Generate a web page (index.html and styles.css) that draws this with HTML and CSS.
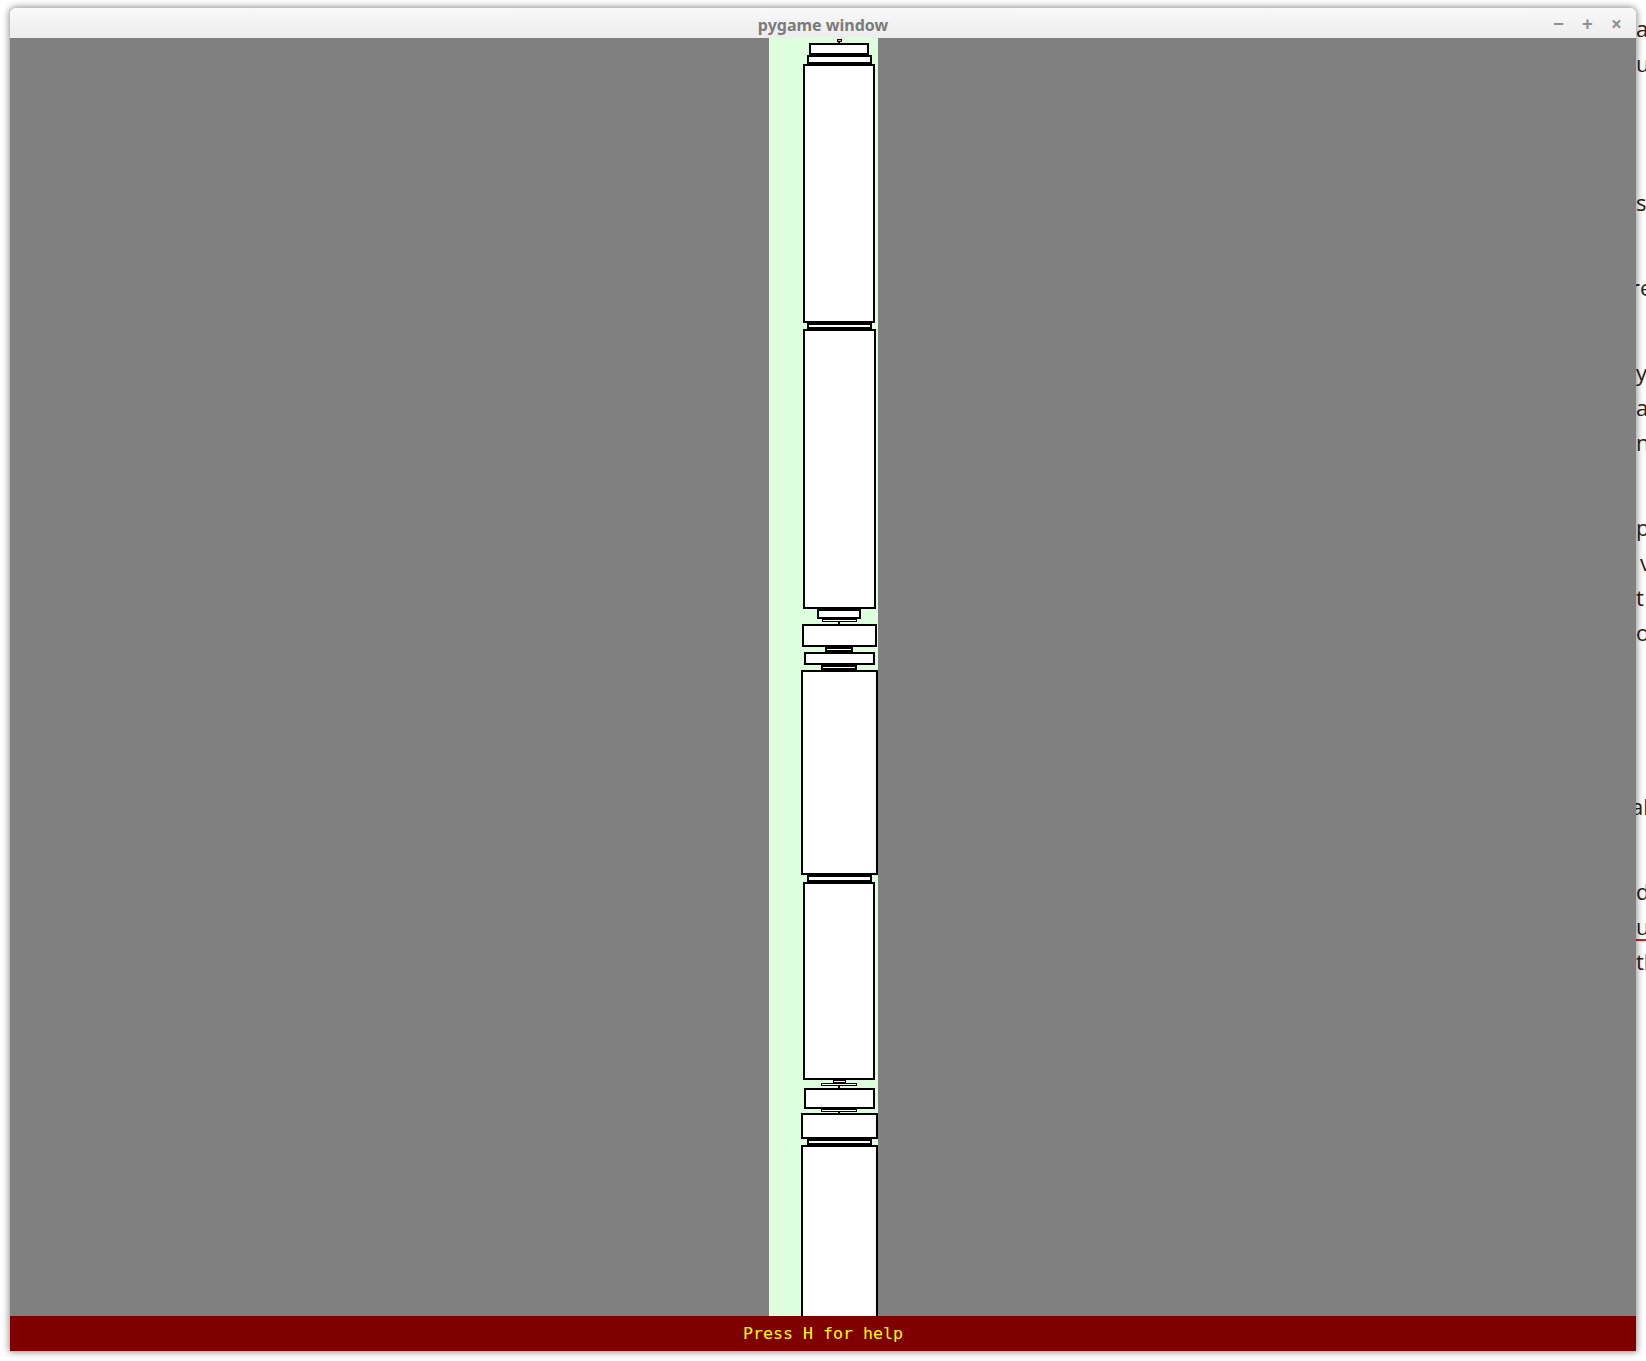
FILE: index.html
```html
<!DOCTYPE html>
<html>
<head>
    <title>pygame window</title>
    <link rel="stylesheet" href="styles.css">
</head>
<body>

<!-- Document text peeking out behind the window -->
<div class="doc-tail">
    <div class="doc-line">a</div>
    <div class="doc-line">ut</div>
    <div class="doc-line gap-big">s</div>
    <div class="doc-line gap part">re</div>
    <div class="doc-line gap">y</div>
    <div class="doc-line">a</div>
    <div class="doc-line">n</div>
    <div class="doc-line gap">p</div>
    <div class="doc-line wide">v</div>
    <div class="doc-line">t</div>
    <div class="doc-line">o</div>
    <div class="doc-line gap-huge part">ak</div>
    <div class="doc-line gap">d</div>
    <div class="doc-line"><span class="misspelt">u</span></div>
    <div class="doc-line">th</div>
</div>

<div class="desktop">
    <div class="window">
        <div class="titlebar">
            <div></div>
            <div class="title">pygame window</div>
            <div class="controls">
                <span>&minus;</span>
                <span>+</span>
                <span>&times;</span>
            </div>
        </div>

        <div class="screen">
            <div class="lane">
                <div class="dot"></div>
                <div class="tick" style="height: 1px"></div>
                <div class="box" style="width: 60px; height: 12px"></div>
                <div class="box" style="width: 65px; height: 9px"></div>
                <div class="box" style="width: 72px; height: 259px"></div>
                <div class="box" style="width: 65px; height: 6px"></div>
                <div class="box" style="width: 73px; height: 280px"></div>
                <div class="box" style="width: 44px; height: 10px"></div>
                <div class="box thin" style="width: 35px; height: 3px"></div>
                <div class="tick" style="height: 2px"></div>
                <div class="box" style="width: 75px; height: 23px"></div>
                <div class="box" style="width: 28px; height: 5px"></div>
                <div class="box" style="width: 71px; height: 13px"></div>
                <div class="box" style="width: 36px; height: 5px"></div>
                <div class="box" style="width: 77px; height: 205px"></div>
                <div class="box" style="width: 65px; height: 7px"></div>
                <div class="box" style="width: 72px; height: 198px"></div>
                <div class="box thin" style="width: 13px; height: 3px"></div>
                <div class="box thin" style="width: 36px; height: 3px"></div>
                <div class="tick" style="height: 2px"></div>
                <div class="box" style="width: 71px; height: 21px"></div>
                <div class="box thin" style="width: 36px; height: 3px"></div>
                <div class="tick" style="height: 1px"></div>
                <div class="box" style="width: 77px; height: 26px"></div>
                <div class="box" style="width: 65px; height: 6px"></div>
                <div class="box" style="width: 77px; height: 220px"></div>
            </div>
        </div>

        <div class="statusbar">Press H for help</div>
    </div>
</div>

</body>
</html>
```

FILE: styles.css
```css
body {
    margin: 0;
    padding: 0;
    width: 1646px;
    height: 1361px;
    overflow: hidden;
    background-color: #ffffff;
    font-family: "Noto Sans", "Open Sans", sans-serif;
    position: relative;
}

/* text of the document behind the window */
.doc-tail {
    position: absolute;
    left: 1629px;
    top: 11px;
    font-family: "Open Sans", sans-serif;
    font-size: 22px;
    line-height: 35px;
    color: #222;
    white-space: nowrap;
}

.doc-line {
    height: 35px;
    padding-left: 7px;
}

.doc-line.part {
    padding-left: 2px;
}

.doc-line.wide {
    padding-left: 11px;
}

.doc-line.gap {
    margin-top: 50px;
}

.doc-line.gap-big {
    margin-top: 104px;
}

.doc-line.gap-huge {
    margin-top: 139px;
}

.misspelt {
    text-decoration: underline;
    text-decoration-color: #d02020;
    text-decoration-thickness: 2px;
    text-underline-offset: 4px;
}

.desktop {
    padding: 8px 10px 0;
    position: relative;
    z-index: 1;
}

.window {
    width: 1626px;
    border-radius: 6px 6px 0 0;
    overflow: hidden;
    box-shadow: 0 0 7px 1px rgba(0, 0, 0, 0.45);
}

.titlebar {
    height: 30px;
    display: grid;
    grid-template-columns: 1fr auto 1fr;
    align-items: center;
    background: linear-gradient(#f9f9f9, #ececec);
}

.title {
    font-size: 16px;
    font-weight: bold;
    color: #7b7b7b;
    padding-top: 3px;
}

.controls {
    justify-self: end;
    display: flex;
    padding-right: 5px;
    padding-top: 2px;
}

.controls span {
    width: 29px;
    text-align: center;
    color: #909090;
    font-size: 19px;
    font-weight: bold;
}

.screen {
    height: 1278px;
    background-color: #808080;
    display: flex;
    justify-content: center;
}

.lane {
    width: 109px;
    box-sizing: border-box;
    padding: 1px 0 0 32px;
    background-color: #ddffdd;
    display: flex;
    flex-direction: column;
    align-items: center;
    overflow: hidden;
}

.dot {
    flex: none;
    width: 5px;
    height: 3px;
    box-sizing: border-box;
    background-color: #ff80c0;
    border: 1px solid #000;
}

.tick {
    flex: none;
    width: 2px;
    background-color: #000;
}

.box {
    flex: none;
    box-sizing: border-box;
    background-color: #fff;
    border: 2px solid #000;
}

.box.thin {
    border-width: 1px;
}

.statusbar {
    height: 35px;
    background-color: #800000;
    color: #ffff00;
    font-family: "DejaVu Sans Mono", monospace;
    font-size: 16.6px;
    line-height: 35px;
    text-align: center;
}
```
